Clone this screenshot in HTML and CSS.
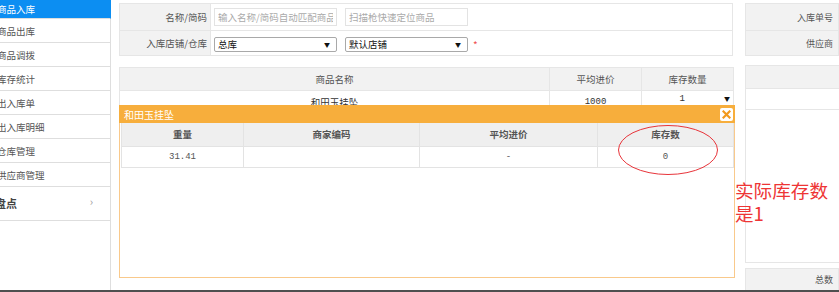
FILE: index.html
```html
<!DOCTYPE html>
<html lang="zh-CN">
<head>
<meta charset="utf-8">
<title>商品入库</title>
<link rel="stylesheet" href="styles.css">
</head>
<body>
<div class="app">
  <aside class="sidebar">
    <div class="nav-item nav-first active"><span>商品入库</span></div>
    <div class="nav-item"><span>商品出库</span></div>
    <div class="nav-item"><span>商品调拨</span></div>
    <div class="nav-item"><span>库存统计</span></div>
    <div class="nav-item"><span>出入库单</span></div>
    <div class="nav-item"><span>出入库明细</span></div>
    <div class="nav-item"><span>仓库管理</span></div>
    <div class="nav-item"><span>供应商管理</span></div>
    <div class="nav-group"><span>盘点</span><i class="chev">›</i></div>
    <div class="nav-fill"></div>
  </aside>
  <main class="main">
    <section class="center">
      <div class="form-panel">
        <div class="form-row">
          <div class="form-label">名称/简码</div>
          <div class="form-field">
            <input class="input" type="text" placeholder="输入名称/简码自动匹配商品">
            <input class="input" type="text" placeholder="扫描枪快速定位商品">
          </div>
        </div>
        <div class="form-row">
          <div class="form-label">入库店铺/仓库</div>
          <div class="form-field">
            <div class="select"><span>总库</span><span class="caret">▼</span></div>
            <div class="select"><span>默认店铺</span><span class="caret">▼</span></div>
            <span class="req">*</span>
          </div>
        </div>
      </div>
      <table class="goods">
        <colgroup><col class="c-name"><col class="c-price"><col class="c-qty"></colgroup>
        <thead>
          <tr><th>商品名称</th><th>平均进价</th><th>库存数量</th></tr>
        </thead>
        <tbody>
          <tr><td>和田玉挂坠</td><td class="num">1000</td><td><div class="qty"><span class="num">1</span><span class="caret">▼</span></div></td></tr>
        </tbody>
      </table>
      <div class="modal">
        <div class="modal-head">
          <span class="modal-title">和田玉挂坠</span>
          <span class="modal-close"><svg width="9" height="9" viewBox="0 0 9 9"><path d="M1.5 1.5 L7.5 7.5 M7.5 1.5 L1.5 7.5" stroke="#f29a1e" stroke-width="2.2" stroke-linecap="square"/></svg></span>
        </div>
        <div class="modal-body">
          <table class="stock">
            <colgroup><col class="s1"><col class="s2"><col class="s3"><col class="s4"></colgroup>
            <thead>
              <tr><th>重量</th><th>商家编码</th><th>平均进价</th><th>库存数</th></tr>
            </thead>
            <tbody>
              <tr><td class="num">31.41</td><td></td><td class="num">-</td><td class="num">0</td></tr>
            </tbody>
          </table>
        </div>
      </div>
    </section>
    <section class="side">
      <div class="side-panel">
        <div class="side-row"><div class="side-label">入库单号</div><div class="side-field"></div></div>
        <div class="side-row"><div class="side-label">供应商</div><div class="side-field"></div></div>
      </div>
      <div class="side-box">
        <div class="side-box-head"></div>
        <div class="side-box-row"></div>
      </div>
      <div class="side-total"><div class="side-label">总数</div><div class="side-field"></div></div>
    </section>
  </main>
</div>
<div class="footer-line"></div>
<svg class="mark" width="102" height="52" viewBox="0 0 102 52"><ellipse cx="51" cy="26" rx="49.5" ry="24.5" fill="none" stroke="#e8343a" stroke-width="1"/></svg>
<div class="note">实际库存数<br>是1</div>
</body>
</html>
```

FILE: styles.css
```css
* { box-sizing: border-box; }
html, body { margin: 0; padding: 0; }
body {
  width: 839px;
  height: 292px;
  overflow: hidden;
  position: relative;
  background: #fff;
  font-family: "Noto Sans CJK SC", "Liberation Sans", sans-serif;
  font-size: 9.5px;
  color: #555;
}
.app {
  display: flex;
  height: 290px;
}
.sidebar {
  width: 111px;
  flex: none;
  display: flex;
  flex-direction: column;
  overflow: hidden;
}
.nav-item {
  height: 24px;
  border-bottom: 1px solid #dedede;
  border-right: 1px solid #dedede;
  display: flex;
  align-items: center;
  color: #555;
}
.nav-item span { margin-left: -3px; white-space: nowrap; }
.nav-first { height: 19px; }
.nav-item.active {
  background: #0c8ef2;
  color: #fff;
  border-right-color: #0c8ef2;
}
.nav-group {
  height: 34px;
  border-bottom: 1px solid #dedede;
  border-right: 1px solid #dedede;
  display: flex;
  align-items: center;
  justify-content: space-between;
  font-size: 11px;
  font-weight: bold;
  color: #444;
}
.nav-group span { margin-left: -5px; margin-top: -2px; }
.chev {
  font-style: normal;
  font-weight: normal;
  color: #999;
  font-size: 11px;
  margin-right: 17px;
  margin-top: -6px;
}
.nav-fill { flex: 1; border-right: 1px solid #dedede; }

.main {
  flex: 1;
  display: flex;
  gap: 12px;
  padding: 3px 0 0 8px;
  min-width: 0;
}
.center {
  width: 614px;
  flex: none;
  position: relative;
}
.form-panel {
  border: 1px solid #e6e6e6;
}
.form-row {
  display: flex;
  height: 26px;
}
.form-row + .form-row { border-top: 1px solid #e6e6e6; height: 25px; }
.form-label {
  width: 91px;
  flex: none;
  background: #f2f2f2;
  border-right: 1px solid #e6e6e6;
  display: flex;
  align-items: center;
  justify-content: flex-end;
  padding-right: 3px;
  color: #555;
}
.form-field {
  display: flex;
  align-items: center;
  gap: 8px;
  padding-left: 3px;
}
.input {
  width: 123px;
  height: 18px;
  border: 1px solid #e3e3e3;
  padding: 0 3px;
  font-family: inherit;
  font-size: 9.5px;
  outline: none;
  margin: 0;
}
.input::placeholder { color: #aaa; }
.select {
  width: 123px;
  height: 15px;
  border: 1px solid #a9a9a9;
  border-radius: 2px;
  display: flex;
  align-items: center;
  justify-content: space-between;
  padding: 0 6px 0 3px;
  color: #111;
  margin-top: 2px;
}
.caret { font-size: 6px; color: #111; }
.req { color: #f05050; margin-left: -3px; font-size: 10px; margin-top: 2px; }

.goods {
  width: 614px;
  margin-top: 11px;
  border-collapse: collapse;
  table-layout: fixed;
}
.c-name { width: 430px; }
.c-price { width: 92px; }
.c-qty { width: 92px; }
.goods th, .goods td {
  border: 1px solid #e6e6e6;
  text-align: center;
  font-weight: normal;
  padding: 0;
}
.goods th { background: #f2f2f2; height: 23px; color: #555; }
.goods td { height: 22px; color: #333; }
.num { font-family: "Liberation Mono", "DejaVu Sans Mono", monospace; font-size: 9px; }
.qty {
  display: flex;
  align-items: center;
  justify-content: flex-end;
  gap: 39px;
  padding-right: 3px;
  margin-top: -6px;
}

.modal {
  position: absolute;
  left: 0;
  top: 102px;
  width: 616px;
  background: #fff;
}
.modal-head {
  height: 18px;
  background: #f7ae3c;
  display: flex;
  align-items: center;
  justify-content: space-between;
  padding: 0 2px 0 5px;
}
.modal-title { color: #fff; font-size: 10px; }
.modal-close {
  width: 13px;
  height: 13px;
  background: #fff;
  border-radius: 2px;
  display: flex;
  align-items: center;
  justify-content: center;
}
.modal-body {
  height: 155px;
  border: 1px solid #f9c98b;
  border-top: none;
  padding: 0 1px;
}
.stock {
  width: 612px;
  border-collapse: collapse;
  table-layout: fixed;
}
.s1 { width: 122px; }
.s2 { width: 176px; }
.s3 { width: 178px; }
.s4 { width: 136px; }
.stock th, .stock td {
  border: 1px solid #e3e3e3;
  border-top: none;
  text-align: center;
  padding: 0;
}
.stock th { background: #efefef; height: 23px; font-weight: bold; color: #555; }
.stock td { height: 21px; color: #555; }

.side {
  width: 200px;
  flex: none;
  display: flex;
  flex-direction: column;
}
.side-panel { border: 1px solid #e6e6e6; }
.side-row { display: flex; height: 26px; }
.side-row + .side-row { border-top: 1px solid #e6e6e6; height: 25px; }
.side-label {
  width: 93px;
  flex: none;
  background: #f2f2f2;
  border-right: 1px solid #e6e6e6;
  display: flex;
  align-items: center;
  justify-content: flex-end;
  padding-right: 5px;
  font-size: 9px;
}
.side-field { flex: 1; }
.side-box {
  margin-top: 9px;
  height: 198px;
  border: 1px solid #e6e6e6;
}
.side-box-head { height: 23px; background: #f2f2f2; border-bottom: 1px solid #e6e6e6; }
.side-box-row { height: 21px; border-bottom: 1px solid #e6e6e6; }
.side-total {
  margin-top: 5px;
  flex: 1;
  display: flex;
  background: #f2f2f2;
  border: 1px solid #e6e6e6;
  border-bottom: none;
}
.side-total .side-field { background: #f2f2f2; }

.footer-line {
  height: 2px;
  background: #4f4f4f;
}
.mark {
  position: absolute;
  left: 617px;
  top: 124px;
}
.note {
  position: absolute;
  left: 735px;
  top: 178px;
  color: #ee3535;
  font-size: 18.6px;
  line-height: 23px;
}
```
